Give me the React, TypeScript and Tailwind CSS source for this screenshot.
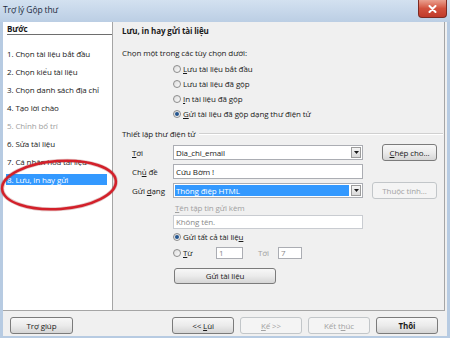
import type { ReactNode } from "react";

function Radio({ checked }: { checked?: boolean }) {
  return (
    <span className="flex h-[8px] w-[8px] shrink-0 items-center justify-center rounded-full border border-[#8c8c8c] bg-linear-to-br from-[#dcdcdc] to-[#fbfbfb]">
      {checked && <span className="h-[4px] w-[4px] rounded-full bg-[#24558f]" />}
    </span>
  );
}

function Btn({
  children,
  className = "",
  disabled,
}: {
  children: ReactNode;
  className?: string;
  disabled?: boolean;
}) {
  return (
    <div
      className={
        "flex shrink-0 items-center justify-center rounded-[3px] border leading-[10px] " +
        (disabled
          ? "border-[#c2c6c9] bg-[#f4f4f4] text-[#a3a3a3] "
          : "border-[#7b7b7b] bg-linear-to-b from-[#f7f7f7] via-[#ebebeb] to-[#d5d5d5] ") +
        className
      }
    >
      {children}
    </div>
  );
}

function Arrow() {
  return (
    <div className="mr-[1px] flex h-[11px] w-[10px] shrink-0 items-center justify-center border border-[#9c9c9c] bg-linear-to-b from-[#f5f5f5] to-[#d9d9d9]">
      <svg width="5" height="3" viewBox="0 0 5 3">
        <path d="M0 0h5L2.5 3z" fill="#1a1a1a" />
      </svg>
    </div>
  );
}

export default function App() {
  const steps = [
    { label: "1. Chọn tài liệu bắt đầu" },
    { label: "2. Chọn kiểu tài liệu" },
    { label: "3. Chọn danh sách địa chỉ" },
    { label: "4. Tạo lời chào" },
    { label: "5. Chỉnh bố trí", disabled: true },
    { label: "6. Sửa tài liệu" },
    { label: "7. Cá nhân hóa tài liệu" },
    { label: "8. Lưu, in hay gửi", selected: true },
  ];

  return (
    <div className="relative flex h-[338px] w-[450px] flex-col overflow-hidden bg-[#b7cbe2] font-['Open_Sans',sans-serif] text-[8px] tracking-[-0.12px] text-[#1a1a1a]">
      {/* title bar */}
      <div className="flex h-[22px] shrink-0 items-start justify-between bg-linear-to-b from-[#d3e1f0] to-[#bbcee4]">
        <span className="ml-[3px] mt-[4px] text-[8.5px] leading-[11px] text-[#1d2b3d]">Trợ lý Gộp thư</span>
        <div className="mr-[3px] flex h-[18px] w-[29px] items-center justify-center rounded-b-[4px] border border-t-0 border-[#7d2a22] bg-linear-to-b from-[#e9a08f] via-[#d2513d] to-[#c03a2a]">
          <svg width="9" height="8" viewBox="0 0 9 8">
            <path d="M1.5 1l6 6M7.5 1l-6 6" stroke="#fff" strokeWidth="2" strokeLinecap="round" />
          </svg>
        </div>
      </div>

      {/* client area */}
      <div className="mx-[3px] mb-[2px] flex flex-1 flex-col bg-[#f0f0f0]">
        <div className="mr-[2px] flex h-[289px] border-b border-r border-[#a5a5a5]">
          {/* steps */}
          <div className="flex w-[110px] shrink-0 flex-col border-r border-[#a5a5a5] bg-white">
            <div className="ml-[4px] mt-[1px] h-[12px] border-b border-[#6e6e6e] pt-[1px] font-bold leading-[10px]">
              Bước
            </div>
            <div className="mt-[9px] flex flex-col">
              {steps.map((s) => (
                <div key={s.label} className="flex h-[18px] items-center pl-[3px]">
                  <div
                    className={
                      "h-[11px] w-[101px] pl-[1px] leading-[11px] " +
                      (s.selected ? "bg-[#3399ff] text-white " : "") +
                      (s.disabled ? "text-[#a0a0a0]" : "")
                    }
                  >
                    {s.label}
                  </div>
                </div>
              ))}
            </div>
          </div>

          {/* options */}
          <div className="flex flex-1 flex-col pl-[9px]">
            <div className="mt-[3px] h-[12px] font-bold leading-[12px]">Lưu, in hay gửi tài liệu</div>
            <div className="mt-[10px] h-[12px] leading-[12px]">Chọn một trong các tùy chọn dưới:</div>
            <div className="mt-[2px] flex flex-col pl-[51px]">
              <div className="flex h-[15px] items-center gap-[2px]">
                <Radio />
                <span><u>L</u>ưu tài liệu bắt đầu</span>
              </div>
              <div className="flex h-[15px] items-center gap-[2px]">
                <Radio />
                <span>Lưu tài liệu đã gộp</span>
              </div>
              <div className="flex h-[15px] items-center gap-[2px]">
                <Radio />
                <span><u>I</u>n tài liệu đã gộp</span>
              </div>
              <div className="flex h-[15px] items-center gap-[2px]">
                <Radio checked />
                <span><u>G</u>ửi tài liệu đã gộp dạng thư điện tử</span>
              </div>
            </div>

            <div className="mt-[7px] flex h-[12px] items-center pr-[1px]">
              <span className="leading-[12px]">Thiết lập thư điện tử</span>
              <div className="ml-[4px] h-[2px] flex-1 border-t border-b border-t-[#d0d0d0] border-b-white" />
            </div>

            <div className="mt-[4px] flex h-[17px] items-center">
              <span className="w-[51px] shrink-0 pl-[10px]"><u>T</u>ới</span>
              <div className="flex h-[15px] w-[190px] items-center border border-[#abadb3] bg-white pl-[2px]">
                <span className="flex-1">Dia_chi_email</span>
                <Arrow />
              </div>
              <Btn className="ml-[19px] h-[17px] w-[55px]"><span><u>C</u>hép cho...</span></Btn>
            </div>
            <div className="mt-[2px] flex h-[17px] items-center">
              <span className="w-[51px] shrink-0 pl-[10px]">Ch<u>ủ</u> đề</span>
              <div className="flex h-[15px] w-[190px] items-center border border-[#abadb3] bg-white pl-[2px]">
                Cứu Bờm !
              </div>
            </div>
            <div className="mt-[2px] flex h-[17px] items-center">
              <span className="w-[51px] shrink-0 pl-[10px]">Gửi <u>d</u>ạng</span>
              <div className="flex h-[15px] w-[190px] items-center border border-[#abadb3] bg-white pl-[1px]">
                <span className="mr-[2px] h-[11px] flex-1 bg-[#3399ff] pl-[1px] leading-[11px] text-white">Thông điệp HTML</span>
                <Arrow />
              </div>
              <Btn disabled className="ml-[9px] h-[17px] w-[65px]">Thuộc tính...</Btn>
            </div>

            <div className="mt-[3px] h-[12px] pl-[53px] leading-[12px] text-[#a0a0a0]"><u>T</u>ên tập tin gửi kèm</div>
            <div className="ml-[51px] mt-[1px] flex h-[14px] w-[190px] items-center border border-[#c9ccd1] bg-white pl-[2px] text-[#8a8a8a]">
              Không tên.
            </div>

            <div className="mt-[1px] flex h-[14px] items-center gap-[2px] pl-[51px]">
              <Radio checked />
              <span>Gửi tất cả tài liệ<u>u</u></span>
            </div>
            <div className="mt-[2px] flex h-[14px] items-center pl-[51px]">
              <Radio />
              <span className="ml-[2px] w-[33px]"><u>T</u>ừ</span>
              <div className="flex h-[12px] w-[27px] items-center border border-[#abadb3] bg-white pl-[2px] text-[#8a8a8a]">1</div>
              <span className="ml-[15px] w-[20px] text-[#a0a0a0]">Tới</span>
              <div className="flex h-[12px] w-[24px] items-center border border-[#abadb3] bg-white pl-[2px] text-[#8a8a8a]">7</div>
            </div>
            <Btn className="ml-[52px] mt-[8px] h-[16px] w-[102px]">Gửi tài liệu</Btn>
          </div>
        </div>

        {/* footer buttons */}
        <div className="flex flex-1 items-start pt-[6px]">
          <Btn className="ml-[7px] h-[17px] w-[63px]">Trợ giúp</Btn>
          <div className="ml-auto mr-[9px] flex gap-[6px]">
            <Btn className="h-[17px] w-[62px]"><span>&lt;&lt; <u>L</u>ùi</span></Btn>
            <Btn disabled className="h-[17px] w-[62px]"><span><u>K</u>ế &gt;&gt;</span></Btn>
            <Btn disabled className="h-[17px] w-[62px]"><span>Kết t<u>h</u>úc</span></Btn>
            <Btn className="h-[17px] w-[62px] font-bold">Thôi</Btn>
          </div>
        </div>
      </div>

      {/* red annotation around the current step */}
      <svg className="pointer-events-none absolute left-0 top-0" width="450" height="338">
        <ellipse cx="59" cy="185" rx="57" ry="24" transform="rotate(-4 59 185)" fill="none" stroke="#8a1c1c" strokeOpacity="0.25" strokeWidth="4" />
        <ellipse cx="59" cy="185" rx="57" ry="24" transform="rotate(-4 59 185)" fill="none" stroke="#d3202a" strokeWidth="2.5" />
      </svg>
    </div>
  );
}
